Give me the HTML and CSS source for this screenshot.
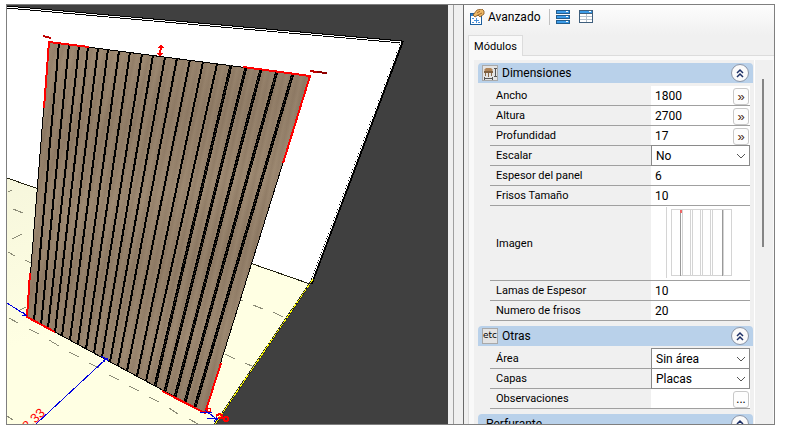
FILE: index.html
```html
<!DOCTYPE html>
<html lang="es">

<head>
  <meta charset="UTF-8" />
  <meta name="viewport" content="width=device-width, initial-scale=1" />
  <title>Módulos</title>
  <link rel="stylesheet" href="styles.css">
</head>

<body>
  <div class="window">
    <main class="viewport">
      <svg class="scene" viewBox="7 5 441 419" preserveAspectRatio="xMinYMin slice" role="img" aria-label="Vista 3D" shape-rendering="crispEdges">
        <defs>
          <linearGradient id="floorFill" x1="0" y1="0" x2="0.4" y2="1">
            <stop offset="0" stop-color="#f6f6dc" />
            <stop offset="0.6" stop-color="#ffffe3" />
          </linearGradient>
          <linearGradient id="grain" gradientUnits="userSpaceOnUse" x1="0" y1="0" x2="14" y2="3" spreadMethod="repeat">
            <stop offset="0" stop-color="#907c66" />
            <stop offset="0.2" stop-color="#9a866f" />
            <stop offset="0.45" stop-color="#937f69" />
            <stop offset="0.7" stop-color="#9c8871" />
            <stop offset="1" stop-color="#907c66" />
          </linearGradient>
          <linearGradient id="bands" gradientUnits="userSpaceOnUse" x1="0" y1="0" x2="14" y2="72" spreadMethod="reflect">
            <stop offset="0" stop-color="#6b5745" stop-opacity="0.15" />
            <stop offset="1" stop-color="#a8947b" stop-opacity="0.2" />
          </linearGradient>
        </defs>

        <!-- wall and floor -->
        <path d="M7 7 402 42 310 285 7 179Z" fill="#fff" />
        <path d="M7 178 310 284 313 279 215 424H7Z" fill="url(#floorFill)" />
        <g fill="none">
          <path d="M7 7 402 42 311 284" stroke="#000" stroke-width="3" />
          <path d="M7 7 401 42 311 282" stroke="#fff" stroke-width="1" />
          <path d="M7 178 310 284" stroke="#221" />
          <path d="M313 279 215 424" stroke="#222" stroke-width="2" />
          <path d="M313 279 215 424" stroke="#ff0" stroke-dasharray="5 1" />
          <path stroke="#8c8c78" d="M8 192l4-2M13 209l10 4M12 239l10-5M8 252l7 4M25 260l6 3M20 310l6-3M9 318l9 5M29 329l10 5M49 340l10 6M69 352l10 5M89 363l10 5M109 375l10 5M129 386l10 5M149 397l10 5M169 408l9 6M189 419l9 5M7 416l6 4M253 305l10 4M273 312l10 5M240 300l3 1M225 354l10 5M245 363l9 4" />
        </g>

        <!-- slatted panel -->
        <path d="M49 42 310 76 205 413 27 317Z" fill="url(#grain)" />
        <path d="M49 42 310 76 205 413 27 317Z" fill="url(#bands)" stroke="#000" />
        <path fill="none" stroke="#000" stroke-width="2" d="M59 43 34 321M69 44 41 325M79 46 48 328M88 47 55 332M98 48 62 336M108 49 70 340M119 51 78 344M130 52 86 349M142 54 94 353M153 55 102 357M165 57 110 362M177 58 118 366M190 60 127 371M203 62 137 376M217 64 146 381" />
        <path fill="none" stroke="#000" stroke-width="3" d="M231 65 155 386M246 67 165 391M261 69 175 397M277 71 185 402M293 73 195 407" />
        <path fill="none" stroke="#5c4e40" stroke-dasharray="1 3" d="M231 65 155 386M246 67 165 391M261 69 175 397M277 71 185 402M293 73 195 407" />

        <!-- selection corners -->
        <g fill="none" stroke="#f00" stroke-width="2">
          <path d="M44 108 49 42 89 47" />
          <path d="M243 67 310 76 283 163" />
          <path d="M30 273 27 317 55 332" />
          <path d="M162 391 205 413 221 363" />
          <path d="M161 46 160 55" />
        </g>
        <path d="M158 48 161 44 164 48ZM157 53 160 57 163 53Z" fill="#f00" />
        <path d="M43 36 51 38M310 71 317 72" fill="none" stroke="#c00000" stroke-width="2" />
        <path d="M317 72 327 73" fill="none" stroke="#900000" stroke-width="2" />

        <!-- dimension lines -->
        <g fill="none" stroke="#0000e0">
          <path d="M7 303 26 315M23 312 26 316M22 315H27" />
          <path d="M106 359 36 424M101 356 109 361M103 361 108 358M104 357V362" />
          <path d="M200 412H212M205 410 211 415M207 418H224M210 414 218 420M218 414 214 422" />
        </g>
        <g fill="none" stroke="#f00">
          <circle cx="209" cy="410" r="2" />
          <path d="M216 416l3-2 3 1 0 3-4 0" stroke-width="2" />
          <circle cx="226" cy="419" r="2" stroke-width="2" />
        </g>
        <text class="measure" transform="translate(22 436) rotate(-43)">12,33</text>
      </svg>
    </main>

    <div class="splitter"></div>

    <aside class="sidebar">
      <div class="toolbar">
        <button type="button" class="tool">
          <svg width="16" height="17" viewBox="0 0 16 17">
            <rect x="0.5" y="4.500" width="11" height="11" fill="#fff" stroke="#1c5f9e" />
            <path d="M1 6h10" stroke="#2f7fc8" stroke-width="2" />
            <path d="M2 9.500h2M2 13.500h2M8 13.500h2M4 11.500h5M6.500 9v5" stroke="#4a90d9" />
            <path d="M3 6 7 1 12 0 14 2 14 5 10 8 8 6 5 8Z" fill="#edb866" stroke="#80501c" stroke-width="0.8" />
            <path d="M7 4 10 2M8 6 12 4" stroke="#a3682c" />
          </svg>
          <span>Avanzado</span>
        </button>
        <span class="divider"></span>
        <button type="button" class="tool" aria-label="Lista">
          <svg width="15" height="15" viewBox="0 0 15 15" shape-rendering="crispEdges">
            <path d="M0 0h14v4H0zM0 5h14v4H0zM0 10h14v4H0z" fill="#245d8c" />
            <path d="M1 1h12v2H1zM1 6h12v2H1zM1 11h12v2H1z" fill="#3b9be8" />
            <path d="M10 1h2v1h-2zM10 6h2v1h-2zM10 11h2v1h-2z" fill="#fff" />
          </svg>
        </button>
        <button type="button" class="tool tool-table" aria-label="Tabla">
          <svg width="15" height="15" viewBox="0 0 15 15" shape-rendering="crispEdges">
            <path d="M0 0h14v13H0z" fill="#3f5f7d" />
            <path d="M1 1h12v2H1z" fill="#3b9be8" />
            <path d="M10 1h2v1h-2z" fill="#fff" />
            <path d="M1 4h12v8H1z" fill="#fff" />
            <path d="M1 6h12v1H1zM1 9h12v1H1zM7 4h1v8H7z" fill="#b4c0cc" />
          </svg>
        </button>
      </div>

      <div class="tabs">
        <button type="button" class="tab">Módulos</button>
      </div>

      <div class="tab-page">
        <div class="sections">
          <section>
            <header class="section-head">
              <span class="section-icon">
                <svg width="16" height="16" viewBox="0 0 16 16">
                  <path d="M2 5 4 3H9L11 5 9 7H4Z" fill="#b08458" />
                  <path d="M2 6h9v2H2z" fill="#80603f" />
                  <path d="M3.500 8v3M6.500 8v4M9.500 8v3" stroke="#8a6b4b" />
                  <path d="M2 13.500h9M2.500 12v3M10.500 12v3M13.500 3v8M12 3.500h3M12 11.500h3" stroke="#555" fill="none" />
                </svg>
              </span>
              <h2>Dimensiones</h2>
              <button type="button" class="collapse" aria-label="Contraer Dimensiones"><svg width="10" height="10" viewBox="0 0 10 10"><path d="M2 5 5 2 8 5M2 9 5 6 8 9" /></svg></button>
            </header>
            <div class="rows">
              <div class="row">
                <label for="ancho">Ancho</label>
                <div class="cell"><input type="text" id="ancho" value="1800"><button type="button" class="more expand">»</button></div>
              </div>
              <div class="row">
                <label for="altura">Altura</label>
                <div class="cell"><input type="text" id="altura" value="2700"><button type="button" class="more expand">»</button></div>
              </div>
              <div class="row">
                <label for="profundidad">Profundidad</label>
                <div class="cell"><input type="text" id="profundidad" value="17"><button type="button" class="more expand">»</button></div>
              </div>
              <div class="row">
                <label for="escalar">Escalar</label>
                <div class="cell cell-select">
                  <select id="escalar"><option>No</option></select>
                  <svg class="arrow" width="10" height="6" viewBox="0 0 10 6"><path d="M1 1 5 5 9 1" /></svg>
                </div>
              </div>
              <div class="row">
                <label for="espesor">Espesor del panel</label>
                <div class="cell"><input type="text" id="espesor" value="6"></div>
              </div>
              <div class="row">
                <label for="frisos">Frisos Tamaño</label>
                <div class="cell"><input type="text" id="frisos" value="10"></div>
              </div>
              <div class="row row-image">
                <span class="name">Imagen</span>
                <div class="cell">
                  <svg class="thumb" width="98" height="74" viewBox="0 0 98 74" fill="none" stroke="#d4d4d4" shape-rendering="crispEdges">
                    <path d="M15.500 1V72" />
                    <path d="M20.500 3.500H80.500V69.500H20.500ZM31.500 4V70M39.500 4V70M41.500 4V70M49.500 4V70M51.500 4V70M59.500 4V70M61.500 4V70M72.500 4V70" />
                    <path d="M29.500 4V70M71.500 4V70" stroke="#999" />
                    <path d="M29 4h2v3h-2z" fill="#e66" stroke="none" />
                  </svg>
                </div>
              </div>
              <div class="row">
                <label for="lamas">Lamas de Espesor</label>
                <div class="cell"><input type="text" id="lamas" value="10"></div>
              </div>
              <div class="row">
                <label for="numero">Numero de frisos</label>
                <div class="cell"><input type="text" id="numero" value="20"></div>
              </div>
            </div>
          </section>

          <section>
            <header class="section-head">
              <span class="section-icon">etc</span>
              <h2>Otras</h2>
              <button type="button" class="collapse" aria-label="Contraer Otras"><svg width="10" height="10" viewBox="0 0 10 10"><path d="M2 5 5 2 8 5M2 9 5 6 8 9" /></svg></button>
            </header>
            <div class="rows">
              <div class="row">
                <label for="area">Área</label>
                <div class="cell cell-select">
                  <select id="area"><option>Sin área</option></select>
                  <svg class="arrow" width="10" height="6" viewBox="0 0 10 6"><path d="M1 1 5 5 9 1" /></svg>
                </div>
              </div>
              <div class="row">
                <label for="capas">Capas</label>
                <div class="cell cell-select">
                  <select id="capas"><option>Placas</option></select>
                  <svg class="arrow" width="10" height="6" viewBox="0 0 10 6"><path d="M1 1 5 5 9 1" /></svg>
                </div>
              </div>
              <div class="row">
                <label for="observaciones">Observaciones</label>
                <div class="cell"><input type="text" id="observaciones"><button type="button" class="more">...</button></div>
              </div>
            </div>
          </section>

          <section>
            <header class="section-head">
              <h2>Perfurante</h2>
              <button type="button" class="collapse" aria-label="Contraer Perfurante"><svg width="10" height="10" viewBox="0 0 10 10"><path d="M2 5 5 2 8 5M2 9 5 6 8 9" /></svg></button>
            </header>
          </section>
        </div>
        <div class="scrollbar"><div class="thumb-bar"></div></div>
      </div>
    </aside>
  </div>
</body>

</html>
```
FILE: styles.css
```css
* {
  box-sizing: border-box;
  margin: 0;
  padding: 0;
}

body {
  font-family: Roboto, "Liberation Sans", sans-serif;
  font-size: 12px;
  background-color: #fff;
  color: #000;
  height: 100vh;
  padding: 4px 13px 9px 6px;
  overflow: hidden;
}

button,
input,
select {
  font: inherit;
  color: inherit;
  border: none;
  background: none;
}

.window {
  display: flex;
  height: 100%;
  border: 1px solid #7f7f7f;
  background-color: #f0f0f0;
  overflow: hidden;
}

.viewport {
  flex: 1;
  min-width: 0;
  background-color: #404040;
}

.scene {
  display: block;
  width: 100%;
  height: 100%;
}

.measure {
  font-family: "Liberation Sans", Arial, sans-serif;
  font-size: 13px;
  fill: #f00;
}

.splitter {
  width: 16px;
  border-right: 1px solid #696969;
  background: linear-gradient(to right, #f0f0f0 5px, #a0a0a0 5px, #a0a0a0 6px, #f0f0f0 6px);
}

.sidebar {
  width: 310px;
  display: flex;
  flex-direction: column;
  padding-left: 4px;
  background: linear-gradient(to bottom, #fdfdfd, #f0f0f0 30px);
}

/* Toolbar */
.toolbar {
  display: flex;
  align-items: center;
  height: 24px;
  padding-left: 2px;
}

.tool {
  display: flex;
  align-items: center;
  gap: 2px;
}

.tool-table {
  margin-left: 8px;
}

.divider {
  width: 1px;
  height: 16px;
  margin: 0 6px 0 8px;
  background-color: #c0c0c0;
}

/* Tabs */
.tabs {
  padding-top: 6px;
  border-bottom: 1px solid #dcdcdc;
}

.tab {
  display: block;
  width: 55px;
  height: 21px;
  margin-bottom: -1px;
  font-size: 11px;
  text-align: center;
  background-color: #f9f9f9;
  border: 1px solid #dcdcdc;
  border-bottom: none;
}

.tab-page {
  flex: 1;
  min-height: 0;
  display: flex;
  padding: 4px 1px 0 5px;
  border-left: 1px solid #dcdcdc;
  background-color: #f9f9f9;
}

.sections {
  flex: 1;
  min-width: 0;
  padding: 3px 1px 0 4px;
  background-color: #f0f0f0;
  border-right: 1px solid #fff;
  overflow: hidden;
}

.scrollbar {
  width: 18px;
  padding: 19px 0 0 7px;
  background-color: #f0f0f0;
}

.thumb-bar {
  width: 2px;
  height: 168px;
  background-color: #858585;
}

/* Property groups */
.section-head {
  display: flex;
  align-items: center;
  height: 20px;
  padding: 0 4px;
  background-color: #b9d1ea;
  border-radius: 4px 4px 0 0;
}

.section-head h2 {
  flex: 1;
  padding-left: 4px;
  font-size: 12px;
  font-weight: normal;
}

.section-icon {
  width: 16px;
  height: 16px;
  font-family: "DejaVu Sans", sans-serif;
  font-size: 9px;
  line-height: 15px;
  text-align: center;
  background-color: #e3e3e3;
  outline: 1px solid #a9a9a9;
  outline-offset: -1px;
}

.collapse {
  display: flex;
  align-items: center;
  justify-content: center;
  width: 18px;
  height: 18px;
  border: 1px solid #8a94a6;
  border-radius: 50%;
  background-color: #fafafa;
}

.collapse path {
  fill: none;
  stroke: #1c2f66;
  stroke-width: 1.5;
}

.rows {
  padding: 3px 3px 5px 12px;
}

.row {
  display: flex;
  height: 20px;
  border-bottom: 1px solid #a0a0a0;
}

.row-image {
  height: 75px;
}

.row label,
.row .name {
  flex: 1;
  align-self: center;
  padding-left: 6px;
  font-size: 11px;
}

.cell {
  position: relative;
  display: flex;
  width: 99px;
  background-color: #fff;
}

.cell input {
  flex: 1;
  min-width: 0;
  padding-left: 4px;
}

.more {
  width: 16px;
  height: 17px;
  margin: 2px 1px 0 0;
  line-height: 15px;
  border: 1px solid #c8c8c8;
  border-radius: 3px;
  background-color: #fdfdfd;
}

.expand {
  font-family: "Liberation Sans", Arial, sans-serif;
  font-size: 13px;
  color: #4a2a10;
}

.cell-select {
  height: 21px;
  margin-top: -1px;
  border: 1px solid #8a8a8a;
}

.cell select {
  flex: 1;
  padding-left: 4px;
  appearance: none;
}

.arrow {
  position: absolute;
  right: 3px;
  top: 7px;
  pointer-events: none;
}

.arrow path {
  fill: none;
  stroke: #555;
}
```
